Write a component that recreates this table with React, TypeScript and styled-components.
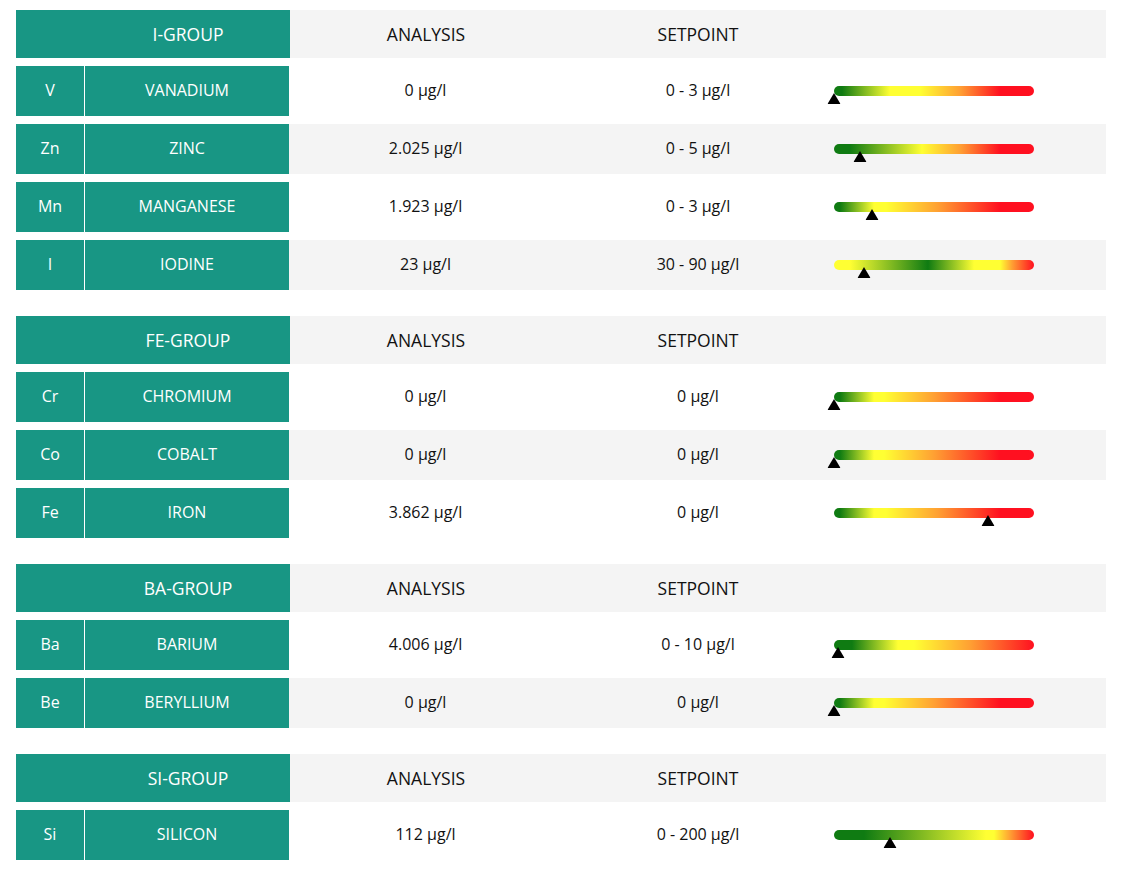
import React from "react";
import styled, { createGlobalStyle } from "styled-components";

const GlobalStyle = createGlobalStyle`
  html, body {
    margin: 0;
    padding: 0;
    background: #ffffff;
  }
  body {
    font-family: "Open Sans", "Liberation Sans", sans-serif;
    color: #111111;
  }
`;

const TEAL = "#189684";
const GREY = "#f4f4f4";

const G = "#0f7b12";
const Y = "#ffff33";
const R = "#ff1020";

type Element = {
  sym: string;
  name: string;
  analysis: string;
  setpoint: string;
  marker: number;
  gradient: string;
};

type Group = { title: string; items: Element[] };

const groups: Group[] = [
  {
    title: "I-GROUP",
    items: [
      {
        sym: "V",
        name: "VANADIUM",
        analysis: "0 µg/l",
        setpoint: "0 - 3 µg/l",
        marker: 0,
        gradient: `linear-gradient(90deg, ${G} 0%, ${G} 4%, ${Y} 28%, ${Y} 43%, #ffa033 63%, ${R} 83%, ${R} 100%)`,
      },
      {
        sym: "Zn",
        name: "ZINC",
        analysis: "2.025 µg/l",
        setpoint: "0 - 5 µg/l",
        marker: 26,
        gradient: `linear-gradient(90deg, ${G} 0%, ${G} 8%, ${Y} 44%, #ffa033 63%, ${R} 83%, ${R} 100%)`,
      },
      {
        sym: "Mn",
        name: "MANGANESE",
        analysis: "1.923 µg/l",
        setpoint: "0 - 3 µg/l",
        marker: 38,
        gradient: `linear-gradient(90deg, ${G} 0%, ${G} 3%, ${Y} 20%, ${Y} 26%, #ffa033 52%, ${R} 83%, ${R} 100%)`,
      },
      {
        sym: "I",
        name: "IODINE",
        analysis: "23 µg/l",
        setpoint: "30 - 90 µg/l",
        marker: 30,
        gradient: `linear-gradient(90deg, ${Y} 0%, ${Y} 8%, ${G} 47%, ${Y} 70%, ${Y} 83%, #ffa033 89%, ${R} 100%)`,
      },
    ],
  },
  {
    title: "FE-GROUP",
    items: [
      {
        sym: "Cr",
        name: "CHROMIUM",
        analysis: "0 µg/l",
        setpoint: "0 µg/l",
        marker: 0,
        gradient: `linear-gradient(90deg, ${G} 0%, ${G} 3%, ${Y} 20%, ${Y} 25%, #ffa033 50%, ${R} 83%, ${R} 100%)`,
      },
      {
        sym: "Co",
        name: "COBALT",
        analysis: "0 µg/l",
        setpoint: "0 µg/l",
        marker: 0,
        gradient: `linear-gradient(90deg, ${G} 0%, ${G} 3%, ${Y} 20%, ${Y} 25%, #ffa033 50%, ${R} 83%, ${R} 100%)`,
      },
      {
        sym: "Fe",
        name: "IRON",
        analysis: "3.862 µg/l",
        setpoint: "0 µg/l",
        marker: 154,
        gradient: `linear-gradient(90deg, ${G} 0%, ${G} 3%, ${Y} 20%, ${Y} 26%, #ffa033 52%, ${R} 83%, ${R} 100%)`,
      },
    ],
  },
  {
    title: "BA-GROUP",
    items: [
      {
        sym: "Ba",
        name: "BARIUM",
        analysis: "4.006 µg/l",
        setpoint: "0 - 10 µg/l",
        marker: 4,
        gradient: `linear-gradient(90deg, ${G} 0%, ${G} 9%, ${Y} 32%, ${Y} 40%, #ffa033 68%, ${R} 100%)`,
      },
      {
        sym: "Be",
        name: "BERYLLIUM",
        analysis: "0 µg/l",
        setpoint: "0 µg/l",
        marker: 0,
        gradient: `linear-gradient(90deg, ${G} 0%, ${G} 3%, ${Y} 20%, ${Y} 25%, #ffa033 50%, ${R} 83%, ${R} 100%)`,
      },
    ],
  },
  {
    title: "SI-GROUP",
    items: [
      {
        sym: "Si",
        name: "SILICON",
        analysis: "112 µg/l",
        setpoint: "0 - 200 µg/l",
        marker: 56,
        gradient: `linear-gradient(90deg, ${G} 0%, ${G} 15%, ${Y} 76%, ${Y} 80%, #ffa033 88%, ${R} 100%)`,
      },
    ],
  },
];

const Page = styled.div`
  padding: 10px 16px 16px 16px;
  display: flex;
  flex-direction: column;
  gap: 26px;
  width: 1090px;
`;

const Table = styled.section`
  display: flex;
  flex-direction: column;
  gap: 8px;
`;

const HeaderRow = styled.div`
  display: grid;
  grid-template-columns: 274px 272px 272px 272px;
  height: 48px;
  background: ${GREY};
`;

const GroupCell = styled.div`
  background: ${TEAL};
  color: #ffffff;
  font-size: 17.5px;
  display: flex;
  align-items: center;
  justify-content: center;
  padding-left: 70px;
`;

const HeadCell = styled.div`
  font-size: 17.5px;
  color: #111111;
  display: flex;
  align-items: center;
  justify-content: center;
`;

const Row = styled.div<{ $striped: boolean }>`
  display: grid;
  grid-template-columns: 69px 204px 273px 272px 272px;
  height: 50px;
  background: ${(p) => (p.$striped ? GREY : "transparent")};
`;

const SymbolCell = styled.div`
  background: ${TEAL};
  border-right: 1px solid #ffffff;
  color: #ffffff;
  font-size: 16px;
  display: flex;
  align-items: center;
  justify-content: center;
  padding-bottom: 2px;
`;

const NameCell = styled.div`
  background: ${TEAL};
  color: #ffffff;
  font-size: 16px;
  display: flex;
  align-items: center;
  justify-content: center;
  padding-bottom: 2px;
`;

const ValueCell = styled.div`
  font-size: 16px;
  color: #111111;
  display: flex;
  align-items: center;
  justify-content: center;
  padding-bottom: 2px;
`;

const BarCell = styled.div`
  display: flex;
  align-items: center;
`;

const Bar = styled.div<{ $gradient: string }>`
  position: relative;
  width: 200px;
  height: 10px;
  border-radius: 5px;
  background: ${(p) => p.$gradient};
`;

const Marker = styled.svg`
  position: absolute;
  top: 7px;
  width: 13px;
  height: 11px;
  transform: translateX(-50%);
  display: block;
`;

const Indicator: React.FC<{ pos: number; gradient: string }> = ({ pos, gradient }) => (
  <Bar $gradient={gradient}>
    <Marker viewBox="0 0 13 11" style={{ left: `${pos}px` }}>
      <polygon points="6.5,0 13,11 0,11" fill="#000000" />
    </Marker>
  </Bar>
);

export default function App() {
  return (
    <>
      <GlobalStyle />
      <Page>
        {groups.map((g) => (
          <Table key={g.title}>
            <HeaderRow>
              <GroupCell>{g.title}</GroupCell>
              <HeadCell>ANALYSIS</HeadCell>
              <HeadCell>SETPOINT</HeadCell>
              <HeadCell />
            </HeaderRow>
            {g.items.map((it, i) => (
              <Row key={it.sym} $striped={i % 2 === 1}>
                <SymbolCell>{it.sym}</SymbolCell>
                <NameCell>{it.name}</NameCell>
                <ValueCell>{it.analysis}</ValueCell>
                <ValueCell>{it.setpoint}</ValueCell>
                <BarCell>
                  <Indicator pos={it.marker} gradient={it.gradient} />
                </BarCell>
              </Row>
            ))}
          </Table>
        ))}
      </Page>
    </>
  );
}
